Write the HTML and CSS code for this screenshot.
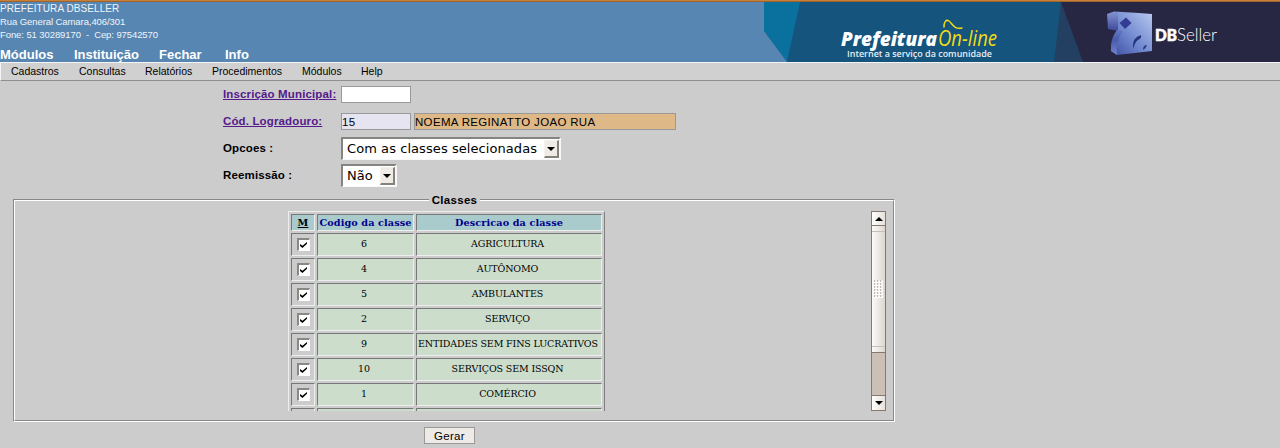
FILE: index.html
```
<!DOCTYPE html>
<html lang="pt-BR">
<head>
<meta charset="utf-8">
<title>Prefeitura On-line</title>
<link rel="stylesheet" href="styles.css">
</head>
<body>
<header class="banner">
  <div class="info">
    <div class="address"><div><span class="l1">PREFEITURA DBSELLER</span></div><div><span class="l2">Rua General Camara,406/301</span></div><div><span class="l3">Fone: 51 30289170 &nbsp;- &nbsp;Cep: 97542570</span></div></div>
    <nav class="main-nav"><a class="n1">Módulos</a><a class="n2">Instituição</a><a class="n3">Fechar</a><a class="n4">Info</a></nav>
  </div>
  <svg class="brand" width="516" height="60" viewBox="764 2 516 60">
    <defs>
      <linearGradient id="cube" x1="0" y1="1" x2="1" y2="0"><stop offset="0" stop-color="#3b4ca0"/><stop offset=".45" stop-color="#7189cf"/><stop offset="1" stop-color="#b9c9f0"/></linearGradient>
      <linearGradient id="side" x1="0" y1="0" x2="0" y2="1"><stop offset="0" stop-color="#8596d2"/><stop offset="1" stop-color="#3d4696"/></linearGradient>
      <linearGradient id="wing" x1="0" y1="0" x2="0" y2="1"><stop offset="0" stop-color="#6479c2"/><stop offset=".4" stop-color="#4a5cae"/><stop offset="1" stop-color="#6f86cc"/></linearGradient>
    </defs>
    <rect x="764" y="2" width="516" height="60" fill="#14547d"/>
    <path d="M764 2H800L787 62L764 31Z" fill="#0a719f"/>
    <path d="M764 31L787 62H764Z" fill="#5786b2"/>
    <path d="M1061 2H1280V62H1054Z" fill="#234062"/>
    <path d="M1061 2H1280V62H1083Z" fill="#282743"/>
    <text class="pref" x="841" y="45.5" textLength="96" lengthAdjust="spacingAndGlyphs">Prefeitura</text>
    <text class="online" x="938" y="45.5" textLength="59" lengthAdjust="spacingAndGlyphs">On-line</text>
    <path d="M944 27C944 22 946 19 949 21S954 30 962 28" fill="none" stroke="#f3dc13" stroke-width="1.5" stroke-linecap="round"/>
    <text class="slogan" x="847" y="56.5" textLength="145" lengthAdjust="spacingAndGlyphs">Internet a serviço da comunidade</text>
    <path d="M1107 14L1114 11.500L1119 14L1118 31L1108 29Z" fill="url(#side)"/>
    <path d="M1114 11.500L1139 13L1152 14V51L1117 55L1111 51Q1112 40 1117 33L1118 29V14Z" fill="url(#cube)"/>
    <path d="M1111 51Q1110 39 1117 30L1123 31Q1115 42 1117 55Z" fill="url(#wing)"/>
    <path d="M1126 17.500L1131.500 23L1125 29L1119.500 23Z" fill="#343b92"/>
    <path d="M1133 49Q1132 37 1141 35Q1142 38 1138 40Q1135 42 1133 49Z" fill="#29367f"/>
    <path d="M1143 50Q1143 45 1147 45Q1146 48 1143 50Z" fill="#29367f"/>
    <text class="db" x="1155" y="41" textLength="22" lengthAdjust="spacingAndGlyphs">DB</text>
    <text class="seller" x="1177" y="41" textLength="40" lengthAdjust="spacingAndGlyphs">Seller</text>
  </svg>
</header>
<nav class="menu"><a class="m1">Cadastros</a><a class="m2">Consultas</a><a class="m3">Relatórios</a><a class="m4">Procedimentos</a><a class="m5">Módulos</a><a class="m6">Help</a></nav>
<main>
  <form class="fields">
    <a class="label link">Inscrição Municipal:</a><div class="inputs"><span class="box"></span></div>
    <a class="label link">Cód. Logradouro:</a><div class="inputs"><span class="box code">15</span><span class="box street">NOEMA REGINATTO JOAO RUA</span></div>
    <span class="label">Opcoes :</span><div class="select wide"><span>Com as classes selecionadas</span><i class="drop"></i></div>
    <span class="label">Reemissão :</span><div class="select"><span>Não</span><i class="drop"></i></div>
  </form>
  <section class="group">
    <h2 class="legend">Classes</h2>
    <div class="frame">
      <div class="viewport">
        <div class="grid">
          <div class="th mark">M</div><div class="th">Codigo da classe</div><div class="th">Descricao da classe</div>
          <div class="check"><i></i></div><div class="td">6</div><div class="td">AGRICULTURA</div>
          <div class="check"><i></i></div><div class="td">4</div><div class="td">AUTÔNOMO</div>
          <div class="check"><i></i></div><div class="td">5</div><div class="td">AMBULANTES</div>
          <div class="check"><i></i></div><div class="td">2</div><div class="td">SERVIÇO</div>
          <div class="check"><i></i></div><div class="td">9</div><div class="td left">ENTIDADES SEM FINS LUCRATIVOS</div>
          <div class="check"><i></i></div><div class="td">10</div><div class="td">SERVIÇOS SEM ISSQN</div>
          <div class="check"><i></i></div><div class="td">1</div><div class="td">COMÉRCIO</div>
          <div class="check"></div><div class="td"></div><div class="td"></div>
        </div>
      </div>
      <div class="scrollbar">
        <div class="arrow up"></div>
        <div class="thumb"><div class="grip"></div></div>
        <div class="trough"></div>
        <div class="arrow down"></div>
      </div>
    </div>
  </section>
  <button class="submit" type="button">Gerar</button>
</main>
</body>
</html>
```
FILE: styles.css
```
* { box-sizing: border-box; }
body { margin: 0; height: 448px; overflow: hidden; background: #ccc; color: #000; font-family: "Liberation Sans", Arial, sans-serif; }
.banner { height: 62px; border-top: 1px solid #c98036; background: #5786b2; box-shadow: inset 0 1px #9a6531; display: flex; justify-content: space-between; color: #fff; }
.brand { display: block; margin-top: 1px; }
.info { padding-top: 1px; }
.address { font-size: 9.5px; line-height: 13px; white-space: nowrap; color: #f0f5fa; }
.l1 { font-size: 10px; letter-spacing: .08px; }
.l2 { letter-spacing: -.08px; }
.l3 { letter-spacing: -.09px; }
.main-nav { display: flex; height: 20px; padding-top: 6px; font-size: 13px; line-height: 16px; font-weight: bold; }
.n1 { width: 74px; }
.n2 { width: 85px; }
.n3 { width: 66px; }
.pref { font: italic 800 20px "Open Sans", sans-serif; fill: #fff; }
.online { font: italic 400 21px "Open Sans", sans-serif; fill: #f3dc13; }
.slogan { font: 600 9.5px "Open Sans", sans-serif; fill: #e6eef4; }
.db { font: 900 17px Lato, sans-serif; fill: #fff; stroke: #fff; stroke-width: .6px; }
.seller { font: 300 18px Lato, sans-serif; fill: #fff; }
.menu { display: flex; height: 19px; padding-left: 10px; border: solid; border-width: 1px 0 1px 1px; border-color: #f4f4f4 #ccc #909090 #f4f4f4; background: #d0d0d0; font-size: 10.5px; line-height: 17px; }
.m1 { width: 68px; }
.m2 { width: 66px; }
.m3 { width: 67px; }
.m4 { width: 90px; }
.m5 { width: 59px; }
.fields { display: grid; grid-template-columns: 118px auto; grid-auto-rows: 27px; align-items: center; justify-content: start; width: 700px; height: 110px; padding: 0 0 0 223px; }
.label { padding-bottom: 2px; font-size: 11.5px; font-weight: bold; white-space: nowrap; letter-spacing: .14px; }
.link { color: #551a8b; text-decoration: underline; }
.inputs { display: flex; gap: 3px; }
.box { width: 70px; height: 17px; border: 1px solid #999; background: #fff; font-size: 11.5px; line-height: 16px; letter-spacing: .32px; white-space: nowrap; }
.code { background: #e6e4f1; }
.street { width: 262px; background: #deb887; }
.select { display: flex; justify-content: space-between; width: 56px; height: 23px; padding: 1px 0 0 4px; border: solid; border-width: 2px 2px 1px; border-color: #848480 #f8f8f8 #f8f8f8 #848480; background: #fff; font: 13px/18px "DejaVu Sans", sans-serif; letter-spacing: .07px; white-space: nowrap; }
.wide { width: 220px; }
.drop { width: 15px; height: 18px; border: solid; border-width: 1px 2px 2px 1px; border-color: #f4f2ee #84827a #84827a #f4f2ee; background: #efebe7; display: grid; place-content: center; }
.drop::before { content: ""; border: solid transparent; border-width: 4px 4px 0; border-top-color: #000; }
.group { position: relative; width: 882px; height: 223px; margin: 8px 0 0 13px; border: 1px solid; border-color: #888 #fff #fff #888; }
.legend { position: absolute; left: 415px; top: -7px; width: 51px; margin: 0; background: #ccc; text-align: center; font-size: 11.5px; line-height: 14px; letter-spacing: .3px; }
.frame { display: flex; height: 221px; padding: 10px 7px 0 0; border: 1px solid; border-color: #fff #888 #888 #fff; }
.viewport { flex: 1; height: 200px; padding-left: 273px; overflow: hidden; }
.grid { display: grid; grid-template-columns: 24px 97px 186px; grid-template-rows: 17px; grid-auto-rows: 23px; gap: 2px; width: 317px; padding: 2px; border: 1px solid; border-color: #eee #808080 #808080 #eee; font: 9.5px/20px "DejaVu Serif", serif; letter-spacing: -.14px; text-align: center; }
.grid > div { border: 1px solid; border-color: #777 #eee #eee #777; white-space: nowrap; overflow: hidden; }
.grid > .th { background: #a9cbcb; color: #00008b; font-weight: bold; line-height: 16px; letter-spacing: .1px; }
.grid > .th.mark { color: #000; text-decoration: underline; }
.td { padding-right: 3px; background: #ccddcc; }
.td.left { text-align: left; padding: 0 0 0 1px; }
.th { font-size: 9.7px; }
.check { display: grid; place-content: center; }
.check i { width: 13px; height: 13px; border: solid; border-width: 2px 1px 1px 2px; border-color: #8a8882 #fff #fff #8a8882; background: #fff; display: grid; place-content: center; }
.check i::before { content: ""; width: 7px; height: 6px; background: #000; clip-path: polygon(0 35%, 35% 62%, 100% 0, 100% 30%, 35% 100%, 0 65%); }
.scrollbar { display: flex; flex-direction: column; width: 15px; height: 200px; border: 1px solid #85796d; background: #cbc0b5; }
.arrow { height: 14px; background: linear-gradient(90deg, #fff, #e6e0d9); display: grid; place-content: center; }
.up { height: 13px; }
.arrow::before { content: ""; border: solid transparent; }
.up::before { border-width: 0 4px 4px; border-bottom-color: #000; }
.down::before { border-width: 4px 4px 0; border-top-color: #000; }
.thumb { height: 128px; padding: 5px 0; border: solid #85796d; border-width: 1px 0; background: linear-gradient(90deg, #fcfbfa, #dcd6cf); display: grid; }
.grip { border: solid #c8c0b8; border-width: 1px 0; display: grid; place-content: center; }
.grip::before { content: ""; width: 9px; height: 18px; background: conic-gradient(#eeeae6 25%, #fff 0 75%, #c4bcb3 0) 0 0 / 3px 3px; }
.trough { flex: 1; border-bottom: 1px solid #85796d; }
.submit { display: block; width: 51px; height: 17px; margin: 5px 0 0 424px; padding: 1px 0 0; border: 1px solid #999; background: #eeebe7; color: #000; font: 11.5px/15px "Liberation Sans", Arial, sans-serif; letter-spacing: .3px; }
```
